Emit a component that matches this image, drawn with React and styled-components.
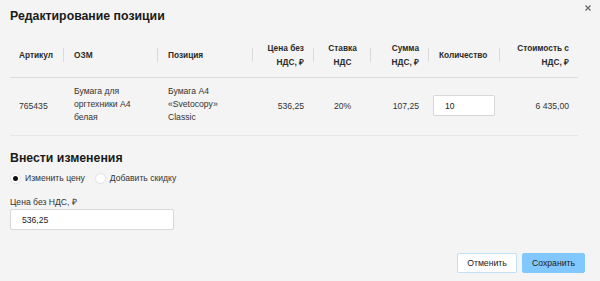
import React from 'react';
import styled, { createGlobalStyle } from 'styled-components';

const GlobalStyle = createGlobalStyle`
  html, body {
    margin: 0;
    padding: 0;
    background: #f4f4f4;
    font-family: "Liberation Sans", Arial, sans-serif;
    color: #2b2b2b;
  }
`;

const Modal = styled.div`
  position: relative;
  width: 600px;
  height: 281px;
  box-sizing: border-box;
  padding: 7px 22px 0 10px;
  background: #f4f4f4;
`;

const Close = styled.button`
  position: absolute;
  top: 5px;
  right: 9px;
  width: 6px;
  height: 6px;
  border: none;
  background: none;
  padding: 0;
  display: block;
  cursor: pointer;
  svg {
    display: block;
  }
`;

const Title = styled.h2`
  margin: 0;
  font-size: 12.3px;
  line-height: 18px;
  font-weight: bold;
  color: #1a1a1a;
`;

const Table = styled.div`
  margin-top: 7px;
  display: grid;
  grid-template-columns: 53px 94px 95px 61px 57px 58px 71px 79px;
`;

const alignToFlex = (a) => (a === 'right' ? 'flex-end' : a === 'center' ? 'center' : 'flex-start');

const HeadCell = styled.div`
  position: relative;
  height: 46px;
  box-sizing: border-box;
  padding: 0 9px 0 ${(p) => (p.$first ? '9px' : '11px')};
  display: flex;
  align-items: center;
  justify-content: ${(p) => alignToFlex(p.$align)};
  text-align: ${(p) => p.$align || 'left'};
  font-size: 8.3px;
  line-height: 14px;
  font-weight: bold;
  color: #2b2b2b;
  border-bottom: 1px solid #dcdcdc;
  &::before {
    content: '';
    display: ${(p) => (p.$first ? 'none' : 'block')};
    position: absolute;
    left: 0;
    top: 16px;
    height: 14px;
    border-left: 1px solid #dadada;
  }
`;

const Cell = styled.div`
  height: 58px;
  box-sizing: border-box;
  padding: 0 9px ${(p) => (p.$multi ? '5px' : '0')} ${(p) => (p.$first ? '9px' : '11px')};
  display: flex;
  align-items: center;
  justify-content: ${(p) => alignToFlex(p.$align)};
  text-align: ${(p) => p.$align || 'left'};
  font-size: 8.6px;
  line-height: 13px;
  color: #333;
  border-bottom: 1px solid #e6e6e6;
`;

const QtyInput = styled.input`
  width: 62px;
  height: 21px;
  box-sizing: border-box;
  margin: 0 0 2px -6px;
  border: 1px solid #d8d8d8;
  border-radius: 2px;
  background: #fff;
  padding: 0 11px;
  font-family: inherit;
  font-size: 8.6px;
  color: #222;
  outline: none;
`;

const Section = styled.h3`
  margin: 14px 0 0;
  font-size: 12.3px;
  line-height: 16px;
  font-weight: bold;
  color: #1a1a1a;
`;

const RadioRow = styled.div`
  margin-top: 6px;
  display: flex;
  align-items: center;
  gap: 10px;
  height: 12px;
`;

const RadioLabel = styled.label`
  display: flex;
  align-items: center;
  gap: 4px;
  font-size: 8.6px;
  color: #333;
  cursor: pointer;
`;

const Dot = styled.span`
  width: 11px;
  height: 11px;
  box-sizing: border-box;
  border-radius: 50%;
  background: #fff;
  border: 1px solid #e2e2e2;
  display: flex;
  align-items: center;
  justify-content: center;
  &::after {
    content: '';
    width: 5px;
    height: 5px;
    border-radius: 50%;
    background: ${(p) => (p.$checked ? '#111' : 'transparent')};
  }
`;

const FieldLabel = styled.div`
  margin-top: 12px;
  font-size: 8.6px;
  line-height: 12px;
  color: #333;
`;

const PriceInput = styled(QtyInput)`
  margin: 1px 0 0;
  width: 164px;
  display: block;
`;

const Footer = styled.div`
  margin-top: 23px;
  margin-right: -7px;
  display: flex;
  justify-content: flex-end;
  gap: 5px;
`;

const Button = styled.button`
  height: 20px;
  box-sizing: border-box;
  padding: 0;
  border-radius: 2px;
  font-family: inherit;
  font-size: 8.7px;
  color: #222;
  cursor: pointer;
  background: ${(p) => (p.$primary ? '#80c8ff' : '#fff')};
  border: 1px solid ${(p) => (p.$primary ? '#80c8ff' : '#bfe0f7')};
  width: ${(p) => (p.$primary ? '63px' : '60px')};
`;

const columns = [
  { head: 'Артикул', first: true },
  { head: 'ОЗМ' },
  { head: 'Позиция' },
  { head: <>Цена без<br />НДС, ₽</>, align: 'right' },
  { head: <>Ставка<br />НДС</>, align: 'center' },
  { head: <>Сумма<br />НДС, ₽</>, align: 'right' },
  { head: 'Количество' },
  { head: <>Стоимость с<br />НДС, ₽</>, align: 'right' },
];

const row = [
  { v: '765435' },
  { v: <>Бумага для<br />оргтехники А4<br />белая</>, multi: true },
  { v: <>Бумага А4<br />«Svetocopy»<br />Classic</>, multi: true },
  { v: '536,25' },
  { v: '20%' },
  { v: '107,25' },
  { input: '10' },
  { v: '6 435,00' },
];

export default function App() {
  return (
    <>
      <GlobalStyle />
      <Modal>
        <Close aria-label="Закрыть">
          <svg width="6" height="6" viewBox="0 0 6 6">
            <path d="M0.5 0.5L5.5 5.5M5.5 0.5L0.5 5.5" stroke="#666" strokeWidth="1.2" />
          </svg>
        </Close>
        <Title>Редактирование позиции</Title>
        <Table>
          {columns.map((c, i) => (
            <HeadCell key={'h' + i} $first={c.first} $align={c.align}>
              <span>{c.head}</span>
            </HeadCell>
          ))}
          {row.map((c, i) => (
            <Cell
              key={'c' + i}
              $first={columns[i].first}
              $multi={c.multi}
              $align={columns[i].align}
            >
              {c.input ? <QtyInput defaultValue={c.input} /> : <span>{c.v}</span>}
            </Cell>
          ))}
        </Table>
        <Section>Внести изменения</Section>
        <RadioRow>
          <RadioLabel>
            <Dot $checked />
            Изменить цену
          </RadioLabel>
          <RadioLabel>
            <Dot />
            Добавить скидку
          </RadioLabel>
        </RadioRow>
        <FieldLabel>Цена без НДС, ₽</FieldLabel>
        <PriceInput defaultValue="536,25" />
        <Footer>
          <Button>Отменить</Button>
          <Button $primary>Сохранить</Button>
        </Footer>
      </Modal>
    </>
  );
}
